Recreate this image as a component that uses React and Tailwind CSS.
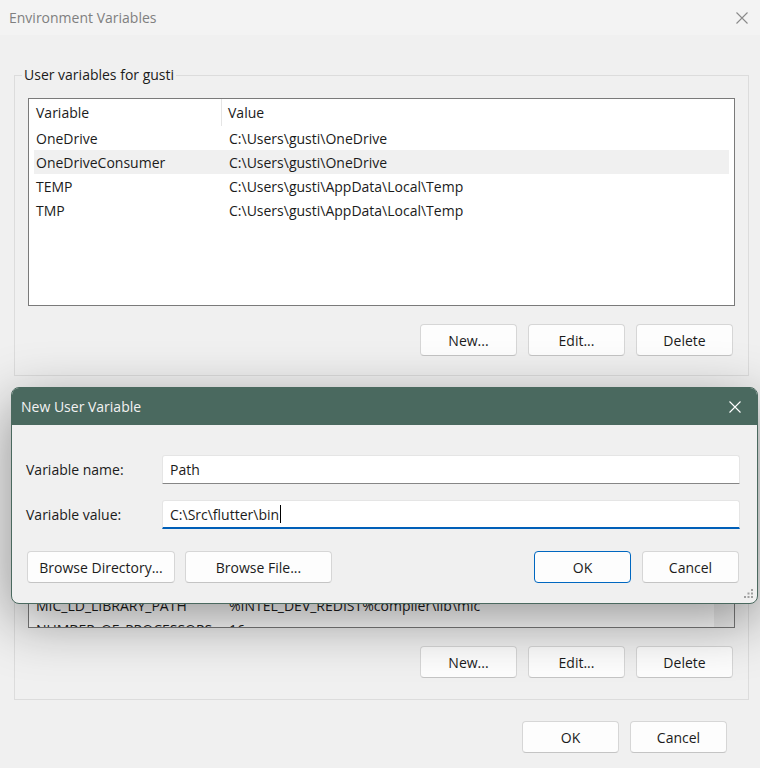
import React from "react";

function Btn({ children, w = "w-[97px]", primary = false }) {
  return (
    <div
      className={`${w} h-[32px] flex items-center justify-center rounded-[4px] text-[14px] text-[#1b1b1b] ${
        primary
          ? "bg-[#fdfdfd] border border-[#0067c0]"
          : "bg-[#fdfdfd] border border-[#d6d6d6] border-b-[#c4c4c4]"
      }`}
    >
      {children}
    </div>
  );
}

function CloseX({ color }) {
  return (
    <svg width="12" height="12" viewBox="0 0 12 12">
      <path d="M0.5 0.5 L11.5 11.5 M11.5 0.5 L0.5 11.5" stroke={color} strokeWidth="1.1" />
    </svg>
  );
}

function Row({ name, value, hl }) {
  return (
    <div className={`flex h-[24px] items-center mx-[5px] ${hl ? "bg-[#f0f0f0]" : ""}`}>
      <div className="w-[188px] pl-[2px] whitespace-nowrap">{name}</div>
      <div className="pl-[7px] whitespace-nowrap">{value}</div>
    </div>
  );
}

function Header() {
  return (
    <div className="flex h-[27px] items-stretch">
      <div className="w-[193px] pl-[7px] flex items-center border-r border-[#e5e5e5]">Variable</div>
      <div className="pl-[6px] flex items-center">Value</div>
    </div>
  );
}

export default function App() {
  return (
    <div className="w-[760px] h-[768px] bg-[#f0f0f0] relative overflow-hidden font-['Open_Sans','Noto_Sans',sans-serif] text-[14px] text-[#1b1b1b]">
      {/* Title bar */}
      <div className="h-[35px] bg-[#f3f3f3] flex items-center justify-between pl-[9px] pr-[12px]">
        <span className="text-[14px] text-[#7f7f7f]">Environment Variables</span>
        <CloseX color="#8a8a8a" />
      </div>

      {/* User variables group */}
      <div className="ml-[14px] mt-[40px] w-[735px] border border-[#dcdcdc] relative pt-[22px] px-[13px] pb-[19px]">
        <span className="absolute left-[7px] top-[-11px] bg-[#f0f0f0] px-[2px] leading-[20px]">User variables for gusti</span>
        <div className="h-[208px] bg-white border border-[#7a7a7a] overflow-hidden">
          <Header />
          <Row name="OneDrive" value="C:\Users\gusti\OneDrive" />
          <Row name="OneDriveConsumer" value="C:\Users\gusti\OneDrive" hl />
          <Row name="TEMP" value="C:\Users\gusti\AppData\Local\Temp" />
          <Row name="TMP" value="C:\Users\gusti\AppData\Local\Temp" />
        </div>
        <div className="mt-[18px] flex justify-end gap-[11px] pr-[2px]">
          <Btn>New...</Btn>
          <Btn>Edit...</Btn>
          <Btn>Delete</Btn>
        </div>
      </div>

      {/* System variables group */}
      <div className="ml-[14px] mt-[22px] w-[735px] border border-[#dcdcdc] relative pt-[22px] px-[13px] pb-[21px]">
        <span className="absolute left-[7px] top-[-11px] bg-[#f0f0f0] px-[2px] leading-[20px]">System variables</span>
        <div className="h-[207px] bg-white border border-[#7a7a7a] overflow-hidden flex">
          <div className="flex-1 overflow-hidden">
            <Header />
            <Row name="ComSpec" value="C:\Windows\system32\cmd.exe" />
            <Row name="DriverData" value="C:\Windows\System32\Drivers\DriverData" />
            <Row name="INTEL_DEV_REDIST" value="C:\Program Files (x86)\Common Files\Intel\Shared Libraries\" />
            <Row name="JAVA_HOME" value="C:\Program Files\Java\jdk" />
            <Row name="LOCALAPPDATA" value="C:\Users\gusti\AppData\Local" />
            <Row name="MAVEN_HOME" value="C:\Program Files\Maven" />
            <Row name="MIC_LD_LIBRARY_PATH" value="%INTEL_DEV_REDIST%compiler\lib\mic" />
            <Row name="NUMBER_OF_PROCESSORS" value="16" />
          </div>
          <div className="w-[20px] bg-[#f0f0f0]" />
        </div>
        <div className="mt-[18px] flex justify-end gap-[11px] pr-[2px]">
          <Btn>New...</Btn>
          <Btn>Edit...</Btn>
          <Btn>Delete</Btn>
        </div>
      </div>

      {/* Main OK / Cancel */}
      <div className="mt-[21px] flex justify-end gap-[11px] pr-[33px]">
        <Btn>OK</Btn>
        <Btn>Cancel</Btn>
      </div>

      {/* New User Variable dialog */}
      <div className="absolute left-[11px] top-[387px] w-[747px] h-[217px] rounded-[8px] border border-[#4a695f] bg-[#f0f0f0] overflow-hidden shadow-[0_16px_56px_rgba(0,0,0,0.42)]">
        <div className="h-[37px] bg-[#4a695f] flex items-center justify-between pl-[9px] pr-[16px]">
          <span className="text-[14px] text-[#f2f2f2]">New User Variable</span>
          <CloseX color="#ffffff" />
        </div>
        <div className="pt-[30px] pl-[14px] pr-[17px]">
          <div className="flex items-center">
            <div className="w-[136px]">Variable name:</div>
            <div className="flex-1 h-[29px] bg-white border border-[#e5e5e5] border-b-[#868686] rounded-t-[3px] flex items-center pl-[7px]">
              Path
            </div>
          </div>
          <div className="flex items-center mt-[16px]">
            <div className="w-[136px]">Variable value:</div>
            <div className="flex-1 h-[29px] bg-white border border-[#e5e5e5] border-b-2 border-b-[#005fb8] rounded-t-[3px] flex items-center pl-[7px]">
              <span>C:\Src\flutter\bin</span>
              <span className="inline-block w-px h-[18px] bg-black ml-[1px]" />
            </div>
          </div>
          <div className="mt-[22px] flex items-center">
            <div className="flex gap-[10px] ml-[1px]">
              <Btn w="w-[148px]">Browse Directory...</Btn>
              <Btn w="w-[147px]">Browse File...</Btn>
            </div>
            <div className="flex-1" />
            <div className="flex gap-[11px] mr-[1px]">
              <Btn primary>OK</Btn>
              <Btn>Cancel</Btn>
            </div>
          </div>
        </div>
        <svg className="absolute right-[3px] bottom-[3px]" width="11" height="11" viewBox="0 0 11 11">
          <rect x="8" y="0" width="2" height="2" fill="#a0a0a0" />
          <rect x="4.5" y="3.5" width="2" height="2" fill="#a0a0a0" />
          <rect x="8" y="3.5" width="2" height="2" fill="#a0a0a0" />
          <rect x="1" y="7" width="2" height="2" fill="#a0a0a0" />
          <rect x="4.5" y="7" width="2" height="2" fill="#a0a0a0" />
          <rect x="8" y="7" width="2" height="2" fill="#a0a0a0" />
        </svg>
      </div>
    </div>
  );
}
